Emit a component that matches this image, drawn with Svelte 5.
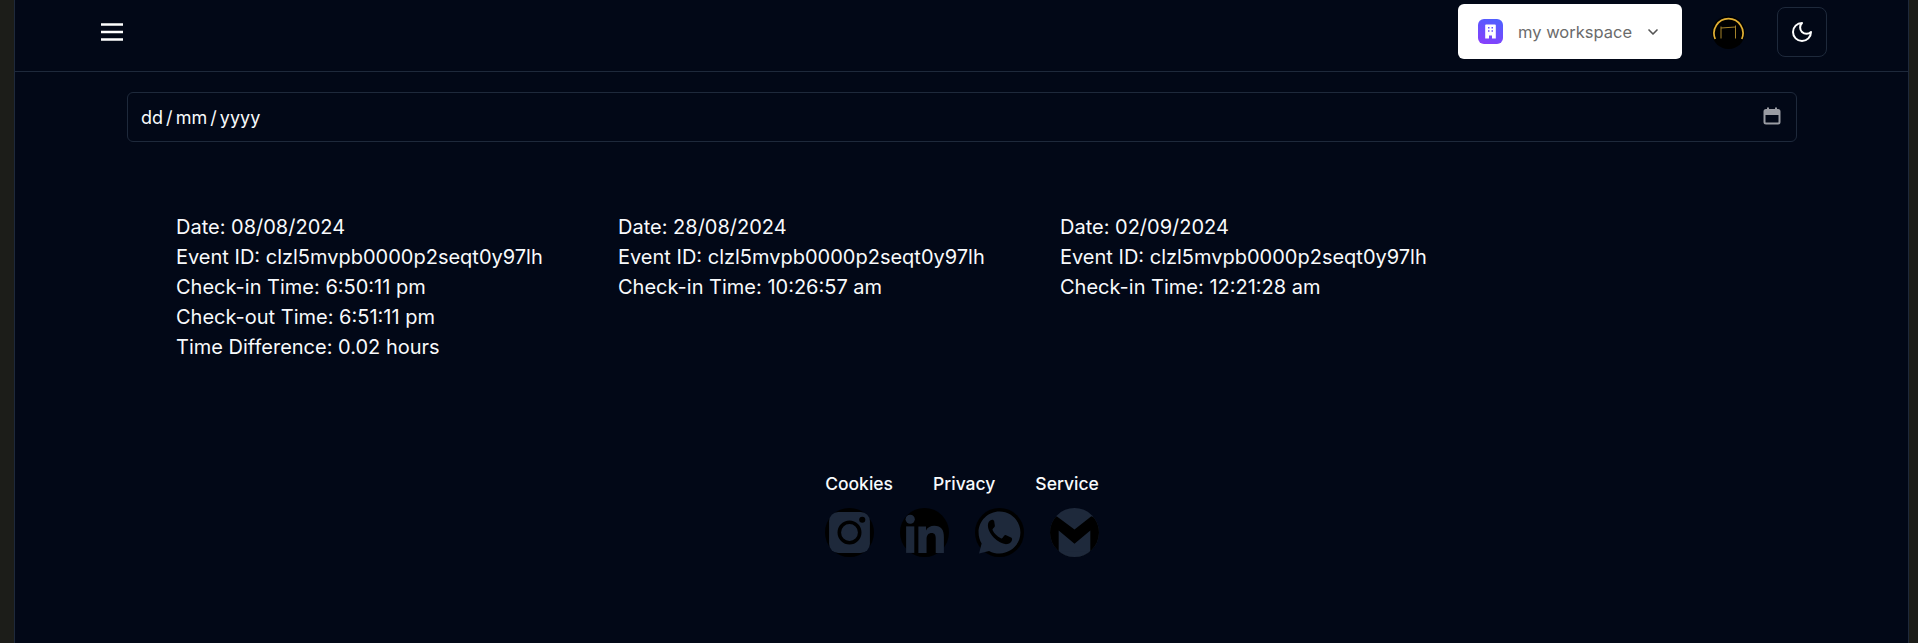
<script>
  const records = [
    { date: "08/08/2024", id: "clzl5mvpb0000p2seqt0y97lh", checkIn: "6:50:11 pm", checkOut: "6:51:11 pm", diff: "0.02" },
    { date: "28/08/2024", id: "clzl5mvpb0000p2seqt0y97lh", checkIn: "10:26:57 am" },
    { date: "02/09/2024", id: "clzl5mvpb0000p2seqt0y97lh", checkIn: "12:21:28 am" }
  ];
  const links = ["Cookies", "Privacy", "Service"];
</script>

<div class="page">
  <div class="shell">
    <header class="topbar">
      <button class="menu" aria-label="Menu">
        <svg width="24" height="24" viewBox="0 0 24 24" fill="none" stroke="currentColor" stroke-width="2.300" stroke-linecap="butt">
          <path d="M1 4.500h22M1 12h22M1 19.500h22" />
        </svg>
      </button>
      <div class="actions">
        <button class="workspace">
          <span class="ws-icon">
            <svg width="17" height="17" viewBox="0 0 17 17" fill="#fff">
              <path fill-rule="evenodd" d="M4 1.500h9a.8.8 0 0 1 .8.8V15.500h-3.800v-3h-3v3H3.200V2.300a.8.800 0 0 1 .8-.8ZM6 4v1.600h1.500V4Zm3.500 0v1.600H11V4ZM6 7.200v1.600h1.500V7.200Zm3.500 0v1.600H11V7.200Z" />
            </svg>
          </span>
          <span class="ws-name">my workspace</span>
          <svg class="chev" width="16" height="16" viewBox="0 0 24 24" fill="none" stroke="currentColor" stroke-width="2.500" stroke-linecap="round" stroke-linejoin="round">
            <path d="m6 9 6 6 6-6" />
          </svg>
        </button>
        <svg class="logo" width="33" height="33" viewBox="0 0 33 33">
          <circle cx="16.500" cy="16.500" r="16.500" fill="#000" />
          <path d="M3.200 23 A14.500 14.500 0 1 1 29.800 23" fill="none" stroke="#e2b034" stroke-width="1.700" />
          <path d="M9 22.500V10.500M23.500 22.500V9.500M9 12 23.500 11" fill="none" stroke="#a5832a" stroke-width="1" />
        </svg>
        <button class="theme" aria-label="Toggle theme">
          <svg width="24" height="24" viewBox="0 0 24 24" fill="none" stroke="currentColor" stroke-width="2" stroke-linecap="round" stroke-linejoin="round">
            <path d="M12 3a6 6 0 0 0 9 9 9 9 0 1 1-9-9Z" />
          </svg>
        </button>
      </div>
    </header>

    <main class="content">
      <label class="date">
        <input type="text" placeholder="dd / mm / yyyy" />
        <svg width="20" height="20" viewBox="0 0 20 20" fill="none" stroke="#9a9ca3" stroke-width="2">
          <rect x="2.500" y="3" width="15" height="13.500" rx="1.500" />
          <path d="M2.500 6h15" stroke-width="4" />
          <path d="M6 .5v3M14 .5v3" />
        </svg>
      </label>

      <section class="records">
        {#each records as r}
          <div class="record">
            <p>Date: {r.date}</p>
            <p>Event ID: {r.id}</p>
            <p>Check-in Time: {r.checkIn}</p>
            {#if r.checkOut}
              <p>Check-out Time: {r.checkOut}</p>
              <p>Time Difference: {r.diff} hours</p>
            {/if}
          </div>
        {/each}
      </section>

      <footer class="foot">
        <nav class="links">
          {#each links as l}
            <a href="#top">{l}</a>
          {/each}
        </nav>
        <div class="socials">
          <svg width="49" height="49" viewBox="0 0 48 48">
            <circle cx="24" cy="24" r="24" fill="#000" />
            <rect x="4" y="4" width="40" height="40" rx="9" fill="#1e293b" />
            <circle cx="24" cy="24" r="10" fill="none" stroke="#000" stroke-width="3.500" />
            <circle cx="36.500" cy="11.500" r="3" fill="#000" />
          </svg>
          <svg width="49" height="49" viewBox="0 0 48 48">
            <circle cx="24" cy="24" r="24" fill="#000" />
            <circle cx="10" cy="11" r="4.500" fill="#1e293b" />
            <rect x="6" y="18" width="8" height="26" fill="#1e293b" />
            <path d="M18 18h7.500v4c1.500-3 4.500-4.500 8-4.500 7 0 9.500 4 9.500 11V44h-8V30c0-3.500-1-5.500-4-5.500s-5 2-5 6V44h-8Z" fill="#1e293b" />
          </svg>
          <svg width="49" height="49" viewBox="0 0 48 48">
            <circle cx="24" cy="24" r="24" fill="#000" />
            <path d="M24 3.500C12.700 3.500 3.500 12.700 3.500 24c0 4 1.100 7.500 3 10.800L4 44.500l9.800-2.500C17 43.700 20.400 44.500 24 44.500c11.300 0 20.500-9.200 20.500-20.500S35.300 3.500 24 3.500Z" fill="#1e293b" />
            <path d="M17 11.500c-1.500 0-3.700 1.500-4.200 4-.8 4 1.500 9 5.500 13.500 4.500 4.500 9.500 7 13.500 6.300 2.500-.5 4.200-2.500 4.500-4.300.1-1-.3-1.600-1-2l-4.800-2.400c-.7-.3-1.300-.2-1.800.4l-1.800 2.300c-.4.5-1 .6-1.600.3-3.500-1.500-6.500-4.500-8-7.700-.3-.6-.2-1.100.2-1.500l1.600-1.900c.4-.5.5-1 .3-1.600L18.800 13c-.4-1-1-1.500-1.800-1.500Z" fill="#000" />
          </svg>
          <svg width="49" height="49" viewBox="0 0 48 48">
            <clipPath id="mail-clip"><circle cx="24" cy="24" r="24" /></clipPath>
            <g clip-path="url(#mail-clip)">
              <rect width="48" height="48" fill="#1e293b" />
              <path d="M0 11 6.500 8 24 21 40.500 8 48 11V48H0Z" fill="#000" />
              <path d="M8.500 22 24 35 39.500 22V43H8.500Z" fill="#1e293b" />
              <rect y="43" width="48" height="5" fill="#1e293b" />
            </g>
          </svg>
        </div>
      </footer>
    </main>
  </div>
</div>

<style>
  :global(body) {
    margin: 0;
    background: #1c1d19;
    font-family: Inter, "Liberation Sans", sans-serif;
  }
  .page {
    height: 643px;
    overflow: hidden;
    padding: 0 9px 0 14px;
  }
  .shell {
    height: 643px;
    background: #020817;
    color: #f8fafc;
    border-left: 1px solid #1e293b;
    border-right: 1px solid #1e293b;
  }
  .topbar {
    height: 71px;
    box-sizing: border-box;
    display: flex;
    align-items: center;
    justify-content: space-between;
    padding: 0 81px 7px 85px;
  }
  .menu {
    background: none;
    border: 0;
    padding: 0;
    color: #fff;
    display: flex;
  }
  .actions {
    display: flex;
    align-items: center;
  }
  .workspace {
    width: 224px;
    height: 55px;
    margin-bottom: 1px;
    background: #fff;
    border: 0;
    border-radius: 6px;
    display: flex;
    align-items: center;
    padding: 0 20px;
    color: #6b6b6b;
    font: 400 16.500px Inter, "Liberation Sans", sans-serif;
  }
  .ws-icon {
    width: 25px;
    height: 25px;
    border-radius: 6px;
    background: linear-gradient(200deg, #4a62ff, #8b3dfb);
    display: flex;
    align-items: center;
    justify-content: center;
    flex: none;
  }
  .ws-name {
    margin-left: 15px;
    white-space: nowrap;
  }
  .chev {
    margin-left: 13px;
    color: #555;
  }
  .logo {
    margin-left: 30px;
  }
  .theme {
    width: 50px;
    height: 50px;
    margin-left: 32px;
    background: none;
    border: 1px solid #1e293b;
    border-radius: 8px;
    color: #fff;
    display: flex;
    align-items: center;
    justify-content: center;
    padding: 0;
  }
  .content {
    border-top: 1px solid #1e293b;
    padding: 20px 111px 0 112px;
  }
  .date {
    height: 50px;
    box-sizing: border-box;
    border: 1px solid #1e293b;
    border-radius: 6px;
    display: flex;
    align-items: center;
    padding: 0 14px 0 13px;
  }
  .date input {
    flex: 1;
    background: none;
    border: 0;
    outline: 0;
    padding: 0;
    color: #f8fafc;
    font: 400 18px Inter, "Liberation Sans", sans-serif;
    word-spacing: -2px;
  }
  .date input::placeholder {
    color: #f8fafc;
    opacity: 1;
  }
  .records {
    margin-top: 70px;
    padding-left: 49px;
    height: 150px;
    display: grid;
    grid-template-columns: repeat(3, 442px);
  }
  .record p {
    margin: 0;
    font-size: 20px;
    line-height: 30px;
    white-space: nowrap;
  }
  .foot {
    margin-top: 110px;
    display: flex;
    flex-direction: column;
    align-items: center;
  }
  .links {
    display: flex;
    gap: 40px;
  }
  .links a {
    color: #f8fafc;
    text-decoration: none;
    font-size: 17.500px;
    font-weight: 500;
    line-height: 24px;
  }
  .socials {
    display: flex;
    gap: 26px;
    margin-top: 12px;
  }
</style>
